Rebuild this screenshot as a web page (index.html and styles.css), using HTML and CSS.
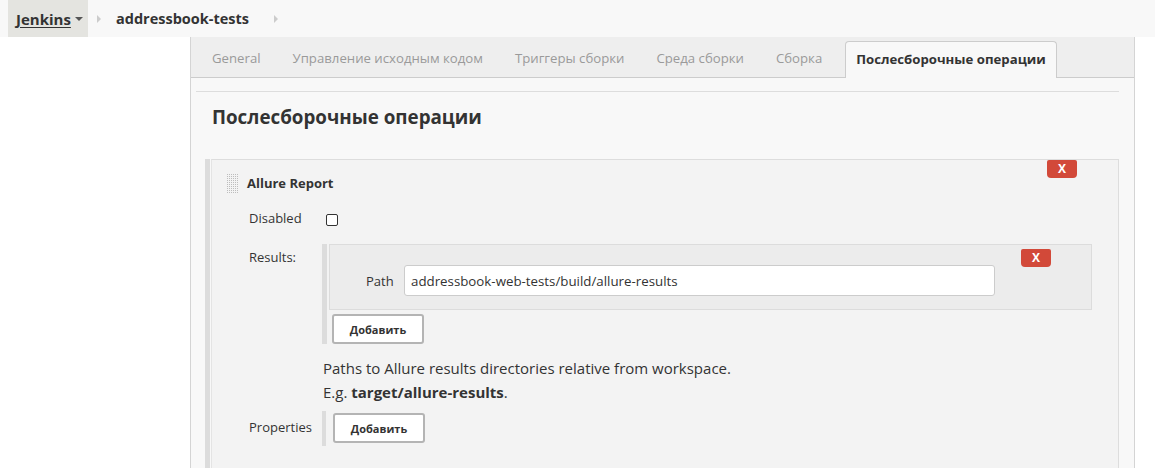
FILE: index.html
```html
<!DOCTYPE html>
<html lang="ru">
<head>
<meta charset="utf-8">
<title>addressbook-tests config</title>
<link rel="stylesheet" href="styles.css">
</head>
<body>
<header class="topbar">
  <div class="crumb crumb-root">
    <a class="crumb-link" href="#">Jenkins</a>
    <span class="caret"></span>
  </div>
  <span class="crumb-sep"></span>
  <div class="crumb crumb-job">addressbook-tests</div>
  <span class="crumb-sep"></span>
</header>
<main class="page">
  <div class="panel">
    <nav class="tabbar">
      <span class="tab">General</span>
      <span class="tab">Управление исходным кодом</span>
      <span class="tab">Триггеры сборки</span>
      <span class="tab">Среда сборки</span>
      <span class="tab">Сборка</span>
      <span class="tab tab-active">Послесборочные операции</span>
    </nav>
    <div class="content">
      <div class="rule"></div>
      <h2 class="section-title">Послесборочные операции</h2>
      <div class="section">
        <div class="section-inner">
          <button class="del-btn del-top" type="button">X</button>
          <div class="section-head">
            <span class="handle"></span>
            <span class="section-name">Allure Report</span>
          </div>
          <div class="row row-disabled">
            <span class="label">Disabled</span>
            <span class="checkbox"></span>
          </div>
          <div class="row row-results">
            <span class="label label-results">Results:</span>
            <div class="control">
              <div class="repeat">
                <div class="repeat-item">
                  <button class="del-btn del-item" type="button">X</button>
                  <span class="path-label">Path</span>
                  <input class="text-input" type="text" value="addressbook-web-tests/build/allure-results">
                </div>
                <button class="add-btn" type="button">Добавить</button>
              </div>
              <div class="help">
                <p>Paths to Allure results directories relative from workspace.</p>
                <p>E.g. <b>target/allure-results</b>.</p>
              </div>
            </div>
          </div>
          <div class="row row-props">
            <span class="label label-props">Properties</span>
            <div class="repeat repeat-props">
              <button class="add-btn" type="button">Добавить</button>
            </div>
          </div>
        </div>
      </div>
    </div>
  </div>
</main>
</body>
</html>
```

FILE: styles.css
```css
* { box-sizing: border-box; }
html, body { margin: 0; padding: 0; }
body {
  background: #ffffff;
  font-family: "Open Sans", "Liberation Sans", sans-serif;
  color: #333333;
  height: 468px;
  overflow: hidden;
}

/* breadcrumb bar */
.topbar {
  height: 37px;
  background: #f8f8f8;
  display: flex;
  align-items: center;
  padding-left: 8px;
}
.crumb {
  height: 37px;
  display: flex;
  align-items: center;
  font-weight: 700;
  font-size: 15px;
}
.crumb-root {
  background: #e4e4e0;
  width: 80px;
  padding-left: 8px;
}
.crumb-link {
  color: #333333;
  text-decoration: underline;
  text-underline-offset: 2px;
}
.caret {
  margin-left: 4px;
  width: 0; height: 0;
  border-left: 4px solid transparent;
  border-right: 4px solid transparent;
  border-top: 4px solid #555;
}
.crumb-sep {
  width: 0; height: 0;
  margin: 0 15px 0 9px;
  border-top: 4px solid transparent;
  border-bottom: 4px solid transparent;
  border-left: 4px solid #cccccc;
}
.crumb-job { color: #333; font-size: 14.5px; }
.crumb-job + .crumb-sep { margin-left: 25px; }

/* page / panel */
.page {
  padding-left: 190px;
  padding-right: 20px;
}
.panel {
  width: 945px;
  height: 431px;
  border-left: 1px solid #d4d4d4;
  border-right: 1px solid #d4d4d4;
  background: #f8f8f8;
}
.tabbar {
  height: 41px;
  background: #eeeeee;
  border-bottom: 1px solid #cccccc;
  display: flex;
  align-items: flex-end;
  padding-left: 5px;
}
.tab {
  font-size: 13.2px;
  color: #9a9a9a;
  padding: 0 16px;
  height: 36px;
  line-height: 34px;
}
.tab-active {
  margin-left: 7px;
  padding: 0 10px;
  background: #f8f8f8;
  border: 1px solid #cccccc;
  border-bottom: none;
  border-radius: 4px 4px 0 0;
  color: #333333;
  font-weight: 700;
  height: 37px;
  margin-bottom: -1px;
}

.content {
  padding: 13px 15px 0 5px;
}
.rule {
  height: 1px;
  background: #dddddd;
}
.section-title {
  margin: 12px 0 0 16px;
  font-size: 18.8px;
  font-weight: 700;
  line-height: 26px;
  height: 55px;
}

/* section */
.section {
  margin-left: 9px;
  border-left: 5px solid #dcdcdc;
  padding-left: 1px;
  height: 320px;
}
.section-inner {
  position: relative;
  height: 100%;
  background: #f3f3f3;
  border-top: 1px solid #dddddd;
  border-right: 1px solid #dddddd;
  border-left: 1px solid #e4e4e4;
  padding-left: 36px;
}
.del-btn {
  position: absolute;
  width: 30px;
  height: 18px;
  padding: 0;
  border: none;
  border-radius: 2px 2px 4px 4px;
  background: #d24939;
  color: #ffffff;
  font-family: "Open Sans", "Liberation Sans", sans-serif;
  font-weight: 700;
  font-size: 12px;
  line-height: 18px;
}
.del-top { top: 0; right: 41px; }
.del-item { top: 4px; right: 40px; }

.section-head {
  display: flex;
  align-items: center;
  height: 46px;
  margin-left: -22px;
}
.handle {
  width: 12px;
  height: 20px;
  background-image:
    linear-gradient(90deg, #f3f3f3 1px, transparent 1px),
    linear-gradient(#f3f3f3 1px, #bdbdbd 1px);
  background-size: 2px 2px, 2px 2px;
  margin-right: 9px;
}
.section-name {
  font-weight: 700;
  font-size: 13px;
}

.row {
  display: flex;
}
.label {
  width: 74px;
  font-size: 13px;
  padding-left: 1px;
}
.row-disabled {
  height: 39px;
  align-items: center;
  margin-top: -8px;
  margin-bottom: 7px;
}
.checkbox {
  margin-left: 4px;
  width: 12px;
  height: 12px;
  border: 1px solid #333;
  border-radius: 2px;
  background: #fff;
  margin-top: 4px;
}
.label-results { padding-top: 4px; }
.control { flex: 1; }
.repeat {
  border-left: 5px solid #dcdcdc;
  padding-left: 2px;
  width: 770px;
}
.repeat-item {
  position: relative;
  height: 66px;
  background: #ececec;
  border: 1px solid #dcdcdc;
  display: flex;
  align-items: center;
  padding-left: 36px;
  padding-top: 7px;
}
.path-label {
  font-size: 13px;
  width: 38px;
}
.text-input {
  width: 591px;
  height: 31px;
  border: 1px solid #cccccc;
  border-radius: 3px;
  background: #fff;
  padding: 0 6px;
  font-family: "Open Sans", "Liberation Sans", sans-serif;
  font-size: 13.3px;
  color: #333;
}
.add-btn {
  display: block;
  margin: 4px 0 1px 3px;
  width: 92px;
  height: 30px;
  background: #ffffff;
  border: 2px solid #b4b4b4;
  border-radius: 3px;
  font-family: "Open Sans", "Liberation Sans", sans-serif;
  font-weight: 700;
  font-size: 11px;
  color: #333;
  padding: 0;
}
.help {
  padding-left: 1px;
  padding-top: 11px;
  font-size: 15px;
  line-height: 24px;
}
.help p { margin: 0; }
.row-props {
  margin-top: 7px;
  align-items: center;
}
.label-props { font-size: 13px; margin-top: -3px; }
.repeat-props {
  width: auto;
  padding-bottom: 2px;
  padding-top: 0;
  border-left-width: 4px;
}
.repeat-props .add-btn { margin: 2px 0 1px 5px; }
```
